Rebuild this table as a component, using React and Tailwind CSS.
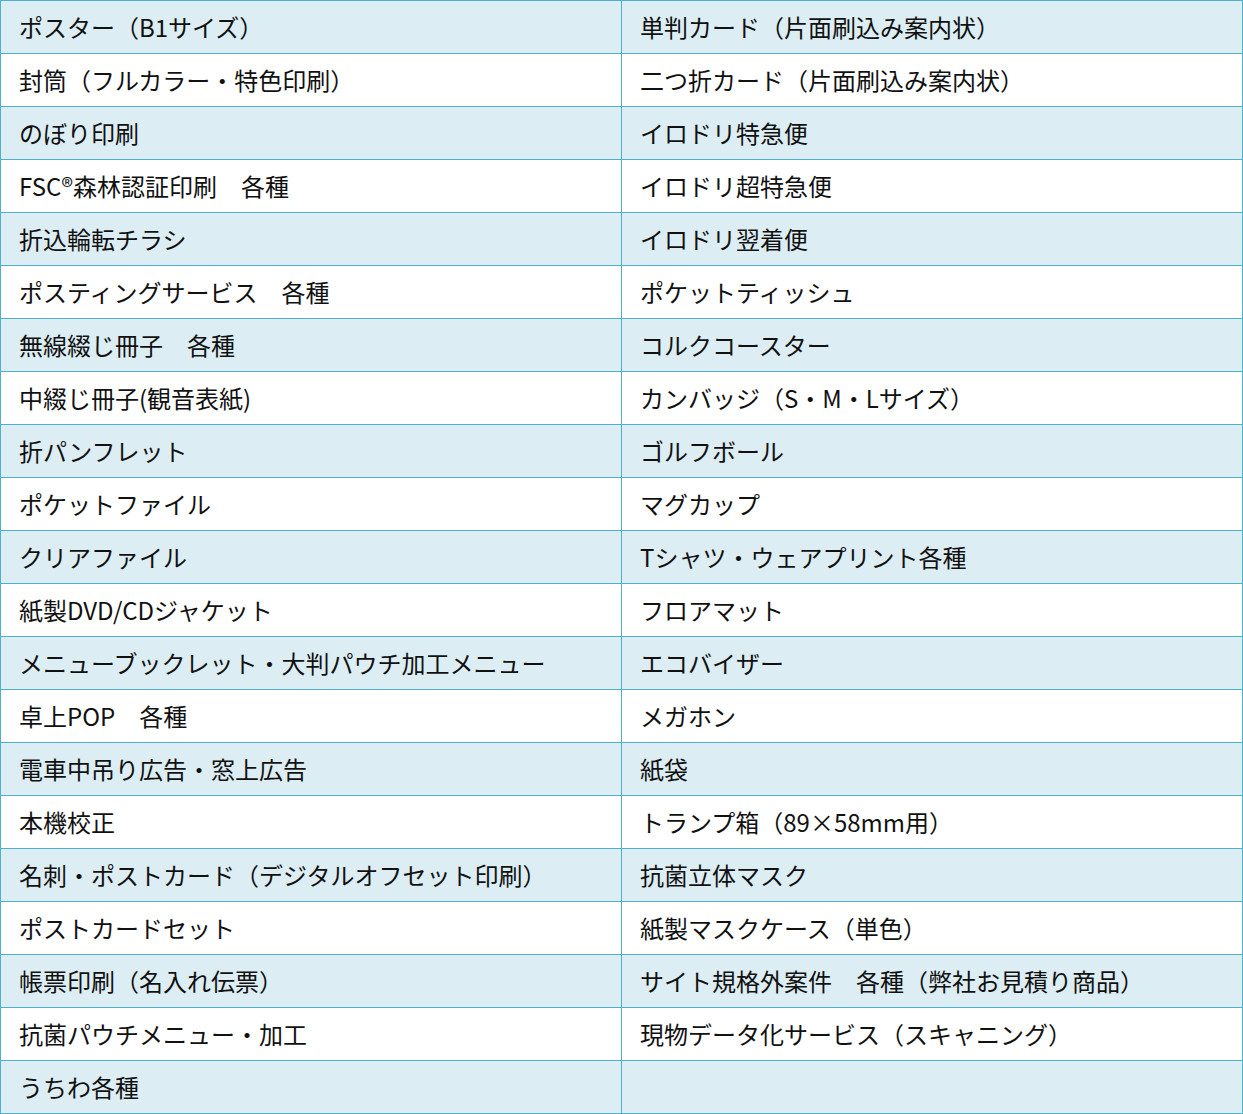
import React from "react";

const rows = [
  ["ポスター（B1サイズ）", "単判カード（片面刷込み案内状）"],
  ["封筒（フルカラー・特色印刷）", "二つ折カード（片面刷込み案内状）"],
  ["のぼり印刷", "イロドリ特急便"],
  ["FSC®森林認証印刷　各種", "イロドリ超特急便"],
  ["折込輪転チラシ", "イロドリ翌着便"],
  ["ポスティングサービス　各種", "ポケットティッシュ"],
  ["無線綴じ冊子　各種", "コルクコースター"],
  ["中綴じ冊子(観音表紙)", "カンバッジ（S・M・Lサイズ）"],
  ["折パンフレット", "ゴルフボール"],
  ["ポケットファイル", "マグカップ"],
  ["クリアファイル", "Tシャツ・ウェアプリント各種"],
  ["紙製DVD/CDジャケット", "フロアマット"],
  ["メニューブックレット・大判パウチ加工メニュー", "エコバイザー"],
  ["卓上POP　各種", "メガホン"],
  ["電車中吊り広告・窓上広告", "紙袋"],
  ["本機校正", "トランプ箱（89×58mm用）"],
  ["名刺・ポストカード（デジタルオフセット印刷）", "抗菌立体マスク"],
  ["ポストカードセット", "紙製マスクケース（単色）"],
  ["帳票印刷（名入れ伝票）", "サイト規格外案件　各種（弊社お見積り商品）"],
  ["抗菌パウチメニュー・加工", "現物データ化サービス（スキャニング）"],
  ["うちわ各種", ""],
];

const App = () => {
  return (
    <div className="w-[1243px] bg-white font-['Noto_Sans_CJK_JP',sans-serif] text-[#111]">
      <div className="grid grid-cols-[621px_621px] border-t border-l border-[#4eb1ca]">
        {rows.map((row, i) =>
          row.map((cell, j) => (
            <div
              key={`${i}-${j}`}
              className={`h-[53px] flex items-center pl-[18px] pb-[1px] border-r border-b border-[#4eb1ca] text-[24px] leading-none whitespace-nowrap ${
                i % 2 === 0 ? "bg-[#dcedf3]" : "bg-white"
              }`}
            >
              {cell}
            </div>
          ))
        )}
      </div>
    </div>
  );
};

export default App;
